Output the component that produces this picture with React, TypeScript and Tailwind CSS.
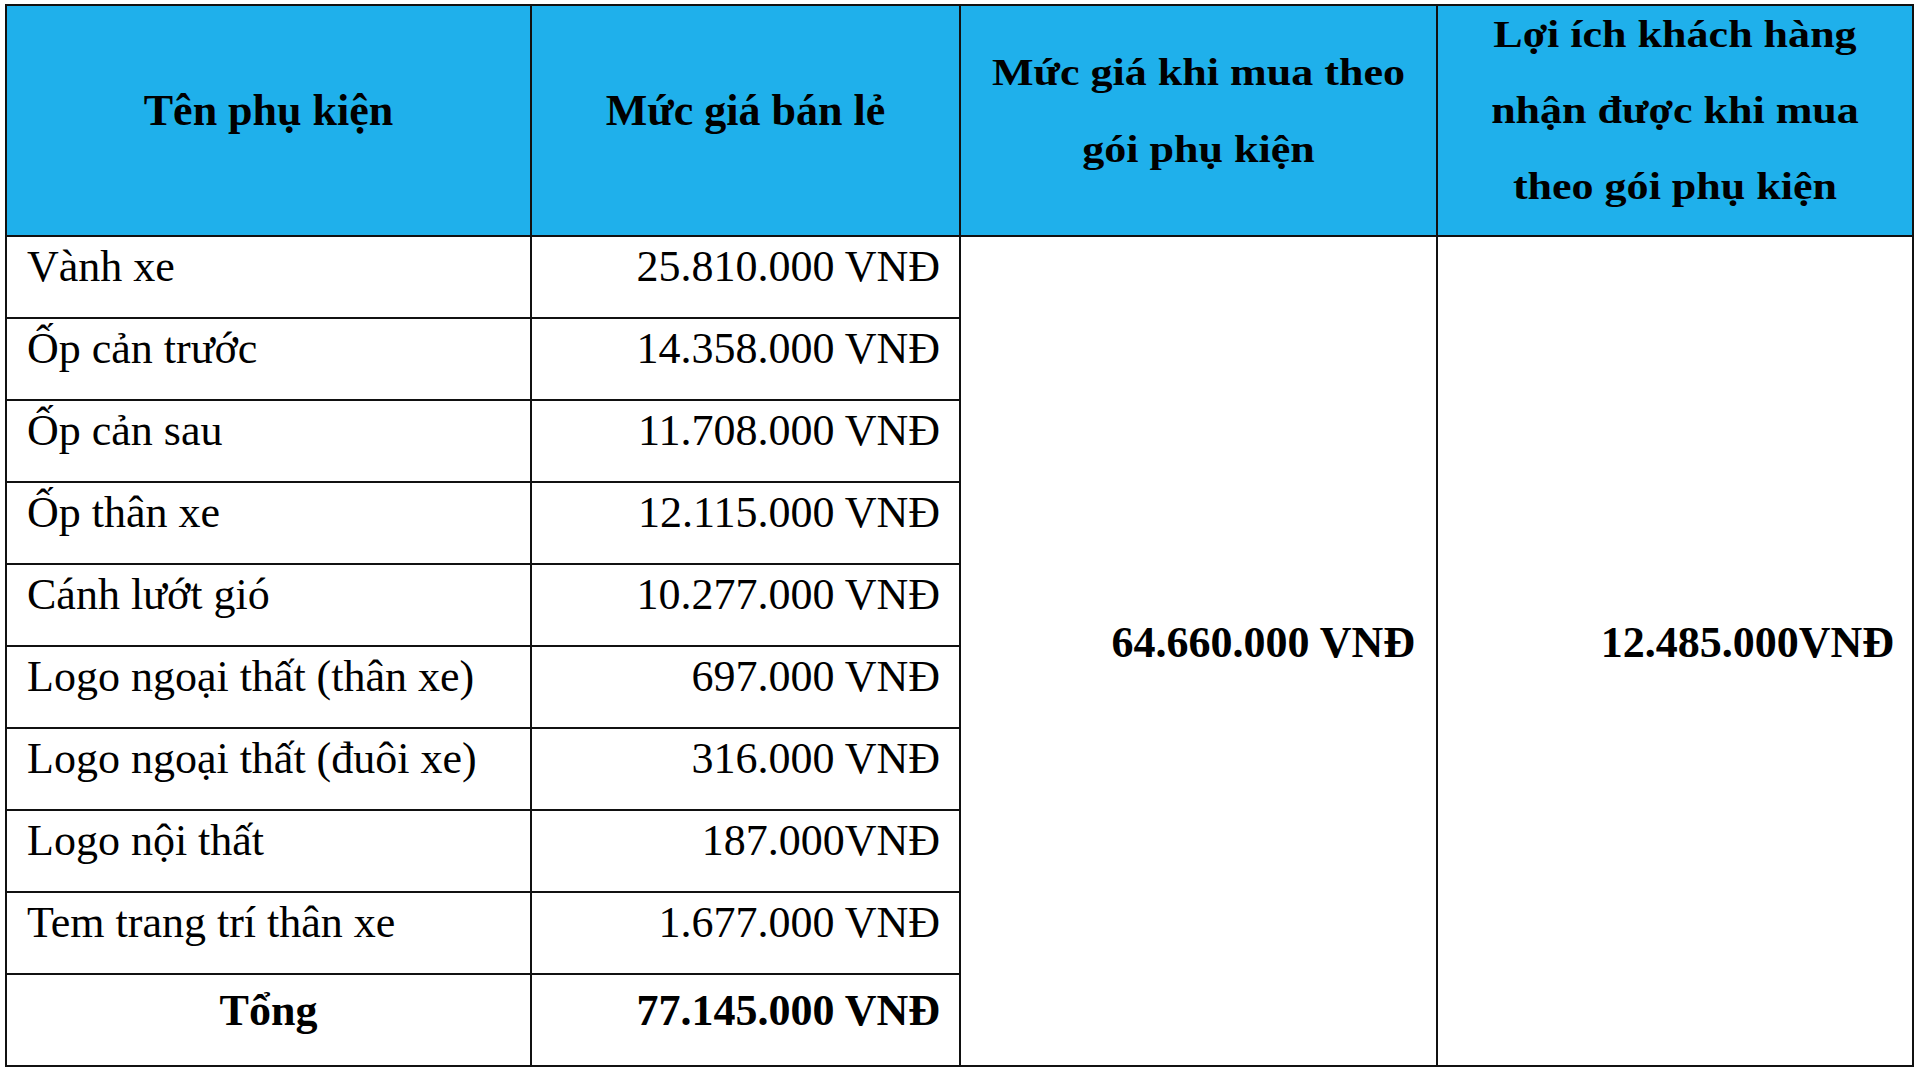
import React from 'react';

const rows = [
  { name: 'Vành xe', price: '25.810.000 VNĐ' },
  { name: 'Ốp cản trước', price: '14.358.000 VNĐ' },
  { name: 'Ốp cản sau', price: '11.708.000 VNĐ' },
  { name: 'Ốp thân xe', price: '12.115.000 VNĐ' },
  { name: 'Cánh lướt gió', price: '10.277.000 VNĐ' },
  { name: 'Logo ngoại thất (thân xe)', price: '697.000 VNĐ' },
  { name: 'Logo ngoại thất (đuôi xe)', price: '316.000 VNĐ' },
  { name: 'Logo nội thất', price: '187.000VNĐ' },
  { name: 'Tem trang trí thân xe', price: '1.677.000 VNĐ' },
];

export default function App() {
  return (
    <div className="min-h-screen bg-white pt-[4px] pl-[5px] text-black" style={{ fontFamily: '"Liberation Serif", "Times New Roman", serif' }}>
      <table className="w-[1907px] border-collapse table-fixed">
        <colgroup>
          <col className="w-[525px]" />
          <col className="w-[429px]" />
          <col className="w-[477px]" />
          <col className="w-[476px]" />
        </colgroup>
        <thead>
          <tr className="h-[231px] bg-[#1fb0eb]">
            <th className="border-2 border-[#111] p-0 align-middle text-[44px] font-bold">
              <div className="-translate-y-[10px]">Tên phụ kiện</div>
            </th>
            <th className="border-2 border-[#111] p-0 align-middle text-[44px] font-bold">
              <div className="-translate-y-[10px]">Mức giá bán lẻ</div>
            </th>
            <th className="border-2 border-[#111] p-0 align-middle text-[37px] font-bold leading-[77px]">
              <div className="-translate-y-[10px] scale-x-[1.19]">
                Mức giá khi mua theo
                <br />
                gói phụ kiện
              </div>
            </th>
            <th className="border-2 border-[#111] p-0 align-middle text-[37px] font-bold leading-[76px]">
              <div className="-translate-y-[10px] scale-x-[1.19]">
                Lợi ích khách hàng
                <br />
                nhận được khi mua
                <br />
                theo gói phụ kiện
              </div>
            </th>
          </tr>
        </thead>
        <tbody>
          {rows.map((row, i) => (
            <tr key={row.name} className="h-[82px]">
              <td className="border-2 border-[#111] px-[20px] pt-[8px] align-top text-[44px] leading-[44px] whitespace-nowrap">
                {row.name}
              </td>
              <td className="border-2 border-[#111] px-[19px] pt-[8px] align-top text-right text-[44px] leading-[44px] whitespace-nowrap">
                {row.price}
              </td>
              {i === 0 && (
                <>
                  <td rowSpan={10} className="border-2 border-[#111] pr-[21px] pb-[16px] align-middle text-right text-[44px] font-bold whitespace-nowrap">
                    64.660.000 VNĐ
                  </td>
                  <td rowSpan={10} className="border-2 border-[#111] pr-[18px] pb-[16px] align-middle text-right text-[44px] font-bold whitespace-nowrap">
                    12.485.000VNĐ
                  </td>
                </>
              )}
            </tr>
          ))}
          <tr className="h-[92px]">
            <td className="border-2 border-[#111] pt-[14px] align-top text-center text-[44px] leading-[44px] font-bold">Tổng</td>
            <td className="border-2 border-[#111] px-[19px] pt-[14px] align-top text-right text-[44px] leading-[44px] font-bold whitespace-nowrap">
              77.145.000 VNĐ
            </td>
          </tr>
        </tbody>
      </table>
    </div>
  );
}
